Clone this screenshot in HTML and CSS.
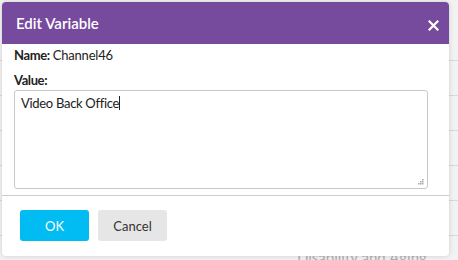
FILE: index.html
```html
<!DOCTYPE html>
<html lang="en">
<head>
    <meta charset="UTF-8" />
    <title>Edit Variable</title>
    <link rel="stylesheet" href="styles.css">
</head>
<body>
    <div class="page">
        <div class="row"></div>
        <div class="row"></div>
        <div class="row"></div>
        <div class="row"></div>
        <div class="row"><span class="cell">Customer</span></div>
        <div class="row"></div>
        <div class="row"><span class="cell">Disability and Aging</span></div>
    </div>
    <div class="overlay"></div>

    <div class="dialog">
        <div class="dialog-header">
            <span class="dialog-title">Edit Variable</span>
            <svg class="close" width="11" height="11" viewBox="0 0 11 11">
                <path d="M1.5 1.5 L9.5 9.5 M9.5 1.5 L1.5 9.5" stroke="#fff" stroke-width="2.2" stroke-linecap="square" />
            </svg>
        </div>
        <div class="dialog-body">
            <div class="field-name"><b>Name:</b> Channel46</div>
            <label class="field-label">Value:</label>
            <div class="textarea">
                <span>Video Back Office</span><span class="caret"></span>
                <svg class="grip" width="6" height="6" viewBox="0 0 6 6">
                    <rect x="4" y="0" width="1.5" height="1.5" fill="#aaa" />
                    <rect x="2" y="2" width="1.5" height="1.5" fill="#aaa" />
                    <rect x="4" y="2" width="1.5" height="1.5" fill="#aaa" />
                    <rect x="0" y="4" width="1.5" height="1.5" fill="#aaa" />
                    <rect x="2" y="4" width="1.5" height="1.5" fill="#aaa" />
                    <rect x="4" y="4" width="1.5" height="1.5" fill="#aaa" />
                </svg>
            </div>
        </div>
        <div class="dialog-footer">
            <button class="btn btn-ok">OK</button>
            <button class="btn btn-cancel">Cancel</button>
        </div>
    </div>
</body>
</html>
```

FILE: styles.css
```css
body {
    margin: 0;
    font-family: Lato, "Open Sans", sans-serif;
    background: #fff;
    color: #333;
    width: 458px;
    height: 260px;
    overflow: hidden;
    position: relative;
}

.page {
    padding-top: 26px;
}

.row {
    height: 34px;
    border-bottom: 1px solid #e4e4e4;
    display: flex;
    align-items: flex-end;
    padding-left: 297px;
}

.cell {
    font-size: 15px;
    color: #bbb;
    padding-bottom: 4px;
}

.overlay {
    position: absolute;
    top: 0;
    left: 0;
    right: 0;
    bottom: 0;
    background: rgba(0, 0, 0, 0.05);
}

.dialog {
    position: absolute;
    top: 2px;
    left: 2px;
    width: 447px;
    height: 254px;
    background: #fff;
    border-radius: 4px;
    box-shadow: 0 0 5px rgba(0, 0, 0, 0.15);
    overflow: hidden;
    display: flex;
    flex-direction: column;
}

.dialog-header {
    flex-shrink: 0;
    background: #764a9c;
    height: 42px;
    display: flex;
    align-items: center;
    justify-content: space-between;
    padding: 0 10px 0 14px;
}

.dialog-title {
    color: #fff;
    font-size: 15px;
    font-weight: 600;
}

.close {
    margin-top: 4px;
}

.dialog-body {
    flex-shrink: 0;
    height: 152px;
    box-sizing: border-box;
    padding: 3px 21px 0 12px;
    font-size: 13px;
    color: #222;
    border-bottom: 1px solid #ccc;
}

.field-name {
    letter-spacing: -0.2px;
}

.field-name b,
.field-label {
    font-weight: 700;
    letter-spacing: -0.4px;
}

.field-label {
    display: block;
    margin-top: 9px;
}

.textarea {
    position: relative;
    margin-top: 2px;
    height: 89px;
    border: 1px solid #c8c8c8;
    border-radius: 3px;
    padding: 4px 6px;
    font-size: 13px;
    letter-spacing: -0.3px;
}

.caret {
    display: inline-block;
    width: 1px;
    height: 14px;
    background: #222;
    vertical-align: -2px;
}

.grip {
    position: absolute;
    right: 3px;
    bottom: 3px;
}

.dialog-footer {
    display: flex;
    gap: 9px;
    padding: 14px 18px;
}

.btn {
    width: 69px;
    height: 31px;
    border: none;
    border-radius: 3px;
    font-family: Lato, "Open Sans", sans-serif;
    font-size: 13px;
    cursor: pointer;
}

.btn-ok {
    background: #00bcf2;
    color: #fff;
}

.btn-cancel {
    background: #e6e6e6;
    color: #333;
}
```
